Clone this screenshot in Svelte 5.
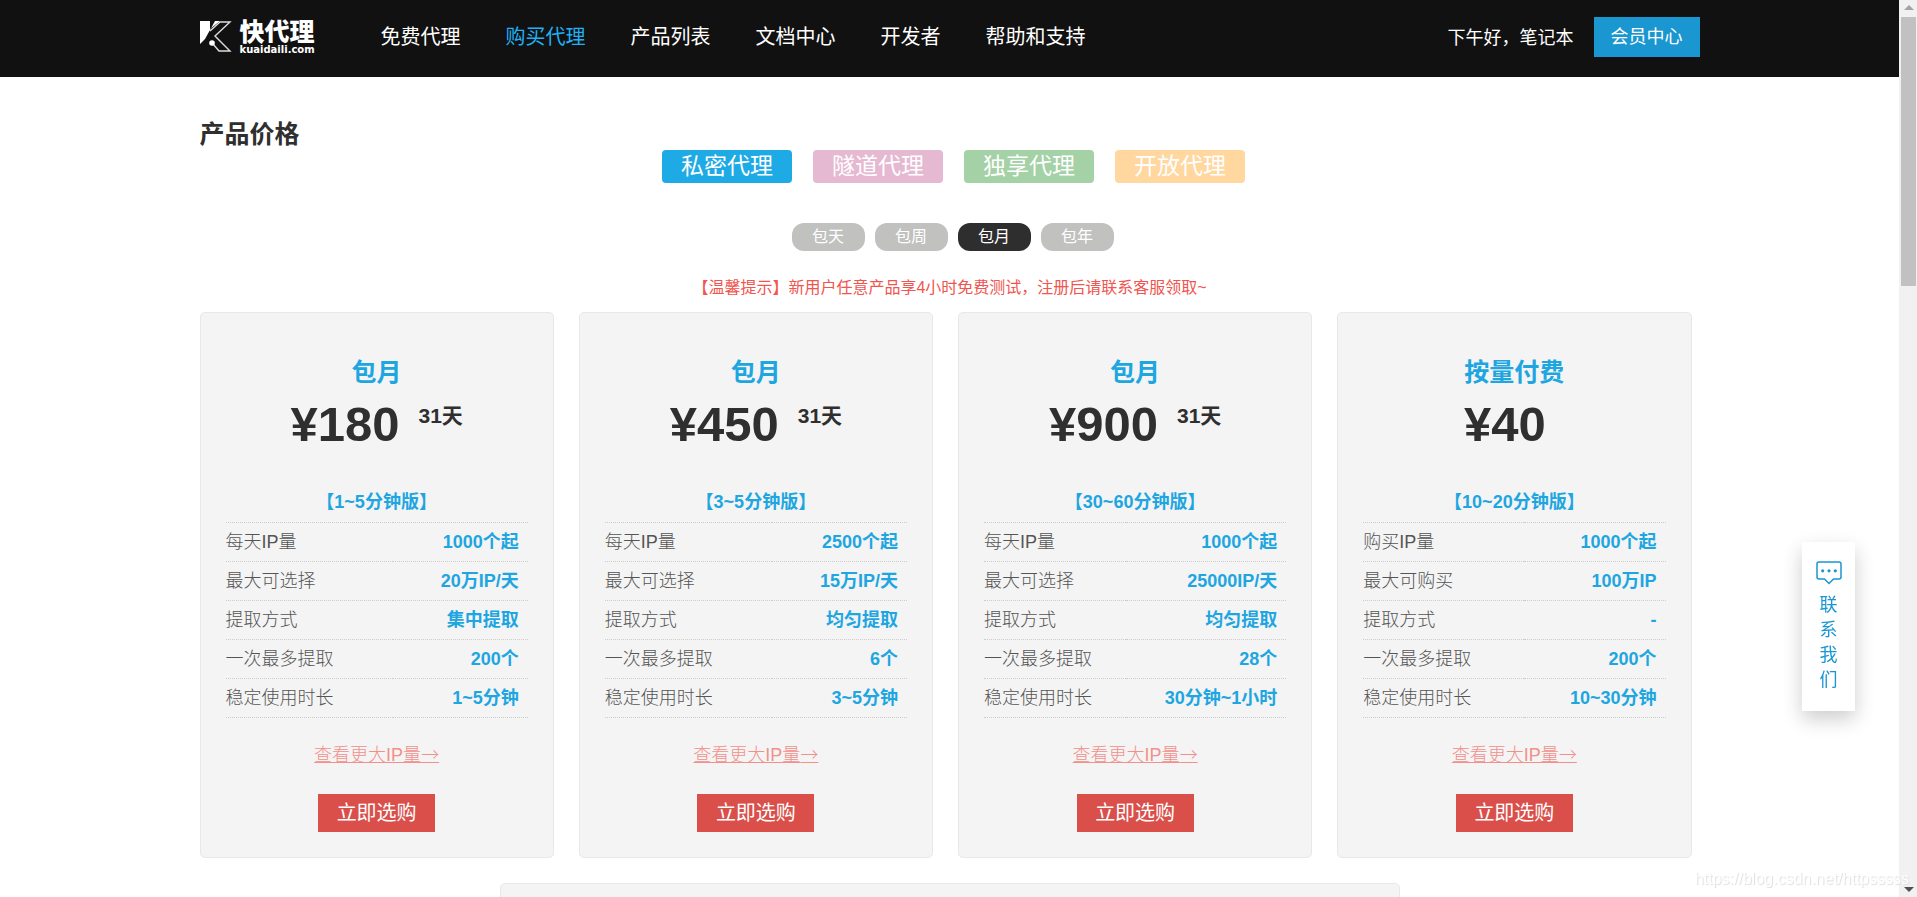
<script lang="ts">
  type Plan = {
    title: string;
    price: number;
    days: string;
    version: string;
    rows: [string, string][];
  };

  const nav = ["免费代理", "购买代理", "产品列表", "文档中心", "开发者", "帮助和支持"];

  const products = [
    { name: "私密代理", color: "blue" },
    { name: "隧道代理", color: "pink" },
    { name: "独享代理", color: "green" },
    { name: "开放代理", color: "orange" },
  ];

  const periods = ["包天", "包周", "包月", "包年"];
  let period = "包月";

  const plans: Plan[] = [
    {
      title: "包月",
      price: 180,
      days: "31天",
      version: "1~5分钟版",
      rows: [
        ["每天IP量", "1000个起"],
        ["最大可选择", "20万IP/天"],
        ["提取方式", "集中提取"],
        ["一次最多提取", "200个"],
        ["稳定使用时长", "1~5分钟"],
      ],
    },
    {
      title: "包月",
      price: 450,
      days: "31天",
      version: "3~5分钟版",
      rows: [
        ["每天IP量", "2500个起"],
        ["最大可选择", "15万IP/天"],
        ["提取方式", "均匀提取"],
        ["一次最多提取", "6个"],
        ["稳定使用时长", "3~5分钟"],
      ],
    },
    {
      title: "包月",
      price: 900,
      days: "31天",
      version: "30~60分钟版",
      rows: [
        ["每天IP量", "1000个起"],
        ["最大可选择", "25000IP/天"],
        ["提取方式", "均匀提取"],
        ["一次最多提取", "28个"],
        ["稳定使用时长", "30分钟~1小时"],
      ],
    },
    {
      title: "按量付费",
      price: 40,
      days: "",
      version: "10~20分钟版",
      rows: [
        ["购买IP量", "1000个起"],
        ["最大可购买", "100万IP"],
        ["提取方式", "-"],
        ["一次最多提取", "200个"],
        ["稳定使用时长", "10~30分钟"],
      ],
    },
  ];
</script>

<div class="page">
  <header>
    <div class="container bar">
      <a class="logo" href="#home">
        <svg viewBox="0 0 32 31" width="32" height="31" aria-hidden="true">
          <path d="M0 0h10v8L20 0h-5L5 18 0 23z" fill="#fff" />
          <path
            d="M10 10 20 1h10L15 15l15 15H19l-6-7"
            fill="none"
            stroke="#ddd"
            stroke-width="1.4"
          />
          <circle cx="12" cy="22" r="2.8" fill="#fff" />
        </svg>
        <span class="brand">
          <span class="brand-name">快代理</span>
          <span class="brand-url">kuaidaili.com</span>
        </span>
      </a>
      <nav>
        {#each nav as item}
          <a href="#nav" class:active={item === "购买代理"}>{item}</a>
        {/each}
      </nav>
      <span class="greeting">下午好，笔记本</span>
      <a class="member" href="#member">会员中心</a>
    </div>
  </header>

  <main class="container">
    <h1>产品价格</h1>

    <div class="products">
      {#each products as product}
        <button class={product.color}>{product.name}</button>
      {/each}
    </div>

    <div class="periods">
      {#each periods as name}
        <button class:active={name === period} on:click={() => (period = name)}>{name}</button>
      {/each}
    </div>

    <p class="notice">【温馨提示】新用户任意产品享4小时免费测试，注册后请联系客服领取~</p>

    <div class="plans">
      {#each plans as plan}
        <section class="card">
          <h2>{plan.title}</h2>
          <div class="price">
            <span>¥{plan.price}</span>
            <span class="days">{plan.days}</span>
          </div>
          <table>
            <caption>【{plan.version}】</caption>
            <tbody>
              {#each plan.rows as [label, value]}
                <tr>
                  <th scope="row">{label}</th>
                  <td>{value}</td>
                </tr>
              {/each}
            </tbody>
          </table>
          <a class="more" href="#more">查看更大IP量<span class="arrow">→</span></a>
          <button class="buy">立即选购</button>
        </section>
      {/each}
    </div>

    <section class="card wide"></section>
  </main>
</div>

<button class="contact">
  <svg viewBox="0 0 26 24" width="26" height="24" aria-hidden="true">
    <path
      d="M3 1h20a2 2 0 0 1 2 2v13a2 2 0 0 1-2 2h-5.500l-4.500 4.500L8.500 18H3a2 2 0 0 1-2-2V3a2 2 0 0 1 2-2z"
      fill="none"
      stroke="currentColor"
      stroke-width="1.500"
    />
    <circle cx="6.700" cy="9.800" r="1.600" fill="currentColor" />
    <circle cx="13" cy="9.800" r="1.600" fill="currentColor" />
    <circle cx="19.300" cy="9.800" r="1.600" fill="currentColor" />
  </svg>
  <span>联系我们</span>
</button>

<div class="scrollbar" aria-hidden="true">
  <svg viewBox="0 0 18 17" width="18" height="17"><path d="M5 10h10l-5-5z" fill="#a3a3a3" /></svg>
  <div class="thumb"></div>
  <svg viewBox="0 0 18 17" width="18" height="17"><path d="M5 7h10l-5 5z" fill="#505050" /></svg>
</div>

<span class="watermark">https://blog.csdn.net/httpsssss</span>

<style>
  :global(body) {
    font-family: "Liberation Sans", "Noto Sans CJK SC", sans-serif;
    color: #2f2f2f;
    background: #fff;
  }

  a {
    color: inherit;
    text-decoration: none;
  }

  button {
    border: none;
    padding: 0;
    font-family: inherit;
    cursor: pointer;
  }

  .page {
    height: 100vh;
    margin-right: 18px;
    overflow: hidden;
  }

  .container {
    max-width: 1500px;
    margin: 0 auto;
  }

  header {
    background: #111;
    color: #fff;
  }

  .bar {
    display: flex;
    align-items: center;
    height: 73px;
    padding-bottom: 4px;
    white-space: nowrap;
  }

  .logo {
    display: flex;
    align-items: center;
    gap: 8px;
    width: 181px;
  }

  .brand {
    padding-top: 2px;
  }

  .brand-name,
  .brand-url {
    display: block;
  }

  .brand-name {
    font-size: 25px;
    font-weight: 900;
    line-height: 24px;
  }

  .brand-url {
    font-family: "DejaVu Sans", sans-serif;
    font-size: 10px;
    font-weight: bold;
    line-height: 12px;
  }

  nav {
    display: flex;
    gap: 45px;
    padding-bottom: 2px;
    font-size: 20px;
  }

  nav .active {
    color: #1eb0f4;
  }

  .greeting {
    margin-left: auto;
    padding-bottom: 2px;
    font-size: 18px;
  }

  .member {
    margin-left: 20px;
    padding: 0 17px;
    font-size: 18px;
    line-height: 40px;
    background: #1a96d0;
  }

  h1 {
    margin: 41px 0 0;
    font-size: 25px;
    line-height: 32px;
  }

  .products,
  .periods {
    display: flex;
    justify-content: center;
  }

  .products {
    gap: 21px;
    padding-left: 8px;
  }

  .products button {
    width: 130px;
    border-radius: 4px;
    font-size: 23px;
    line-height: 33px;
    color: #fff;
  }

  .products .blue {
    background: #1eaae4;
  }

  .products .pink {
    background: #e6b9d2;
  }

  .products .green {
    background: #a4d1a6;
  }

  .products .orange {
    background: #ffd79f;
  }

  .periods {
    gap: 10px;
    margin-top: 40px;
    padding-left: 6px;
  }

  .periods button {
    width: 73px;
    border-radius: 12px;
    font-size: 16px;
    line-height: 28px;
    color: #fff;
    background: #c1c1bf;
  }

  .periods .active {
    background: #2e2e2e;
  }

  .notice {
    margin: 25px 0 12px;
    font-size: 16px;
    line-height: 24px;
    text-align: center;
    color: #f0554f;
  }

  .plans {
    display: grid;
    grid-template-columns: repeat(4, 1fr);
    gap: 25px;
    padding-right: 8px;
  }

  .card {
    display: flex;
    flex-direction: column;
    align-items: center;
    padding: 41px 25px 25px;
    border: 1px solid #e8e8e8;
    border-radius: 5px;
    background: #f4f4f4;
  }

  .wide {
    max-width: 848px;
    min-height: 400px;
    margin: 25px auto 0;
  }

  h2 {
    margin: 0;
    font-size: 25px;
    line-height: 36px;
    color: #1ea6e1;
  }

  .price {
    display: flex;
    align-items: flex-start;
    gap: 19px;
    margin-bottom: 30px;
    font-size: 49px;
    font-weight: bold;
    line-height: 69px;
  }

  .days {
    font-size: 21px;
    line-height: 52px;
  }

  table {
    width: 100%;
    border-collapse: collapse;
    font-size: 18px;
  }

  caption {
    padding-bottom: 7px;
    font-weight: bold;
    line-height: 26px;
    color: #1ea6e1;
  }

  tr {
    border-top: 1px dotted #ccc;
    border-bottom: 1px dotted #ccc;
  }

  th,
  td {
    height: 38px;
    padding: 0;
    line-height: 24px;
  }

  th {
    font-weight: 300;
    text-align: left;
    color: #555;
  }

  td {
    padding-right: 9px;
    font-weight: bold;
    text-align: right;
    color: #1ea6e1;
  }

  .more {
    margin: 22px 0 26px;
    font-size: 18px;
    font-weight: 300;
    line-height: 26px;
    text-decoration: underline;
    color: #f2908b;
  }

  .arrow {
    font-family: "Noto Sans CJK SC", sans-serif;
  }

  .buy {
    width: 117px;
    font-size: 20px;
    line-height: 38px;
    color: #fff;
    background: #da4f4a;
  }

  .contact {
    position: fixed;
    top: 542px;
    right: 62px;
    display: flex;
    flex-direction: column;
    align-items: center;
    gap: 8px;
    width: 53px;
    padding: 19px 17px 18px;
    font-size: 18px;
    line-height: 25px;
    color: #1a96d0;
    background: #fff;
    box-shadow: 0 8px 20px rgba(0, 0, 0, 0.2);
  }

  .contact svg {
    flex-shrink: 0;
  }

  .contact span {
    width: 18px;
  }

  .scrollbar {
    position: fixed;
    top: 0;
    right: 0;
    bottom: 0;
    display: flex;
    flex-direction: column;
    width: 18px;
    background: #f1f1f1;
  }

  .thumb {
    height: 30%;
    margin: 0 1px 0 2px;
    background: #c1c1c1;
  }

  .scrollbar svg:last-child {
    margin-top: auto;
  }

  .watermark {
    position: fixed;
    right: 8px;
    bottom: 8px;
    font-size: 16px;
    line-height: 20px;
    color: #fff;
    text-shadow: 1px 1px 1px #ddd;
  }
</style>
